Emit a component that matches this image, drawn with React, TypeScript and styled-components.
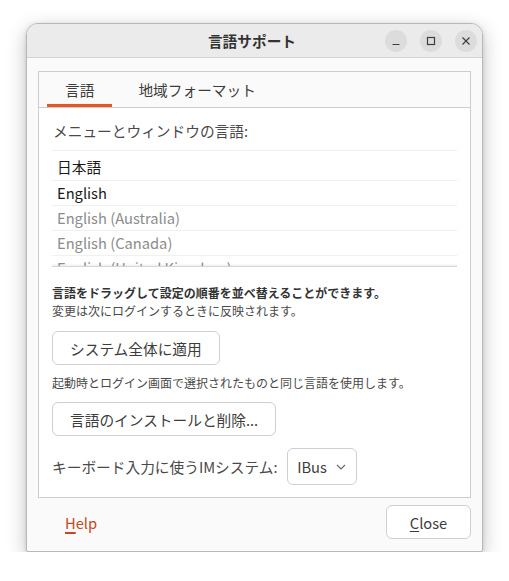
import styled, { createGlobalStyle } from 'styled-components';

const languages = [
  { name: '日本語', active: true },
  { name: 'English', active: true },
  { name: 'English (Australia)', active: false },
  { name: 'English (Canada)', active: false },
  { name: 'English (United Kingdom)', active: false },
];

const GlobalStyle = createGlobalStyle`
  body {
    margin: 0;
    background: #ffffff;
    font-family: "Noto Sans CJK JP", "Noto Sans", sans-serif;
    color: #3d3d3d;
  }
`;

function App() {
  return (
    <Page>
      <GlobalStyle />
      <Window>
        <TitleBar>
          <span />
          <Title>言語サポート</Title>
          <WinButtons>
            <WinButton aria-label='minimize'>
              <svg width='10' height='10' viewBox='0 0 10 10'>
                <path d='M1.5 8.5h7' stroke='#3d3d3d' strokeWidth='1.2' />
              </svg>
            </WinButton>
            <WinButton aria-label='maximize'>
              <svg width='10' height='10' viewBox='0 0 10 10'>
                <rect x='1.5' y='1.5' width='7' height='7' fill='none' stroke='#3d3d3d' strokeWidth='1.2' />
              </svg>
            </WinButton>
            <WinButton aria-label='close'>
              <svg width='10' height='10' viewBox='0 0 10 10'>
                <path d='M1.5 1.5l7 7M8.5 1.5l-7 7' stroke='#3d3d3d' strokeWidth='1.2' />
              </svg>
            </WinButton>
          </WinButtons>
        </TitleBar>

        <Body>
          <Frame>
            <TabBar>
              <Tab $selected>言語</Tab>
              <Tab>地域フォーマット</Tab>
            </TabBar>
            <TabPage>
              <SectionLabel>メニューとウィンドウの言語:</SectionLabel>
              <LangList>
                {languages.map((lang) => (
                  <LangRow key={lang.name} $active={lang.active}>
                    {lang.name}
                  </LangRow>
                ))}
              </LangList>
              <Hint $bold>言語をドラッグして設定の順番を並べ替えることができます。</Hint>
              <Hint>変更は次にログインするときに反映されます。</Hint>
              <Button $mt={11}>システム全体に適用</Button>
              <Hint $mt={9}>起動時とログイン画面で選択されたものと同じ言語を使用します。</Hint>
              <Button $mt={10}>言語のインストールと削除...</Button>
              <ImRow>
                <span>キーボード入力に使うIMシステム:</span>
                <Dropdown>
                  IBus
                  <svg width='10' height='6' viewBox='0 0 10 6'>
                    <path d='M1 1l4 4 4-4' fill='none' stroke='#6a6a6a' strokeWidth='1.2' />
                  </svg>
                </Dropdown>
              </ImRow>
            </TabPage>
          </Frame>

          <Footer>
            <HelpLink>
              <u>H</u>elp
            </HelpLink>
            <Button $width={85}>
              <u>C</u>lose
            </Button>
          </Footer>
        </Body>
      </Window>
    </Page>
  );
}

const Page = styled.div`
  padding: 23px 0 0 26px;
`;

const Window = styled.div`
  width: 457px;
  height: 529px;
  box-sizing: border-box;
  display: flex;
  flex-direction: column;
  background: #fafafa;
  border: 1px solid #b8b8b8;
  border-radius: 12px 12px 2px 2px;
  box-shadow: 0 6px 20px rgba(0, 0, 0, 0.24), 0 1px 4px rgba(0, 0, 0, 0.12);
  overflow: hidden;
`;

const TitleBar = styled.div`
  height: 36px;
  box-sizing: border-box;
  display: grid;
  grid-template-columns: 1fr auto 1fr;
  align-items: center;
  padding-right: 5px;
  background: #ebebeb;
  border-bottom: 1px solid #d2d2d2;
`;

const Title = styled.div`
  font-size: 14.7px;
  font-weight: 700;
  color: #333333;
`;

const WinButtons = styled.div`
  justify-self: end;
  display: flex;
  gap: 13px;
`;

const WinButton = styled.div`
  width: 22px;
  height: 22px;
  border-radius: 50%;
  background: #dcdcdc;
  display: flex;
  align-items: center;
  justify-content: center;
`;

const Body = styled.div`
  flex: 1;
  display: flex;
  flex-direction: column;
  padding: 13px 11px 12px;
`;

const Frame = styled.div`
  display: flex;
  flex-direction: column;
  height: 427px;
  box-sizing: border-box;
  border: 1px solid #cdcdcd;
  background: #ffffff;
`;

const TabBar = styled.div`
  height: 37px;
  box-sizing: border-box;
  display: flex;
  gap: 8px;
  padding-left: 8px;
  background: #fafafa;
  border-bottom: 1px solid #cdcdcd;
`;

const Tab = styled.div<{ $selected?: boolean }>`
  display: flex;
  align-items: center;
  padding: 3px 18px 0;
  font-size: 14.7px;
  color: #3d3d3d;
  box-sizing: border-box;
  border-bottom: 3px solid ${(p) => (p.$selected ? '#e95420' : 'transparent')};
`;

const TabPage = styled.div`
  display: flex;
  flex-direction: column;
  align-items: flex-start;
  padding: 13px 13px 12px;
`;

const SectionLabel = styled.div`
  font-size: 14.7px;
  line-height: 20px;
  color: #4a4a4a;
  padding-left: 1px;
`;

const LangList = styled.div`
  align-self: stretch;
  margin-top: 9px;
  height: 117px;
  box-sizing: border-box;
  overflow: hidden;
  padding-top: 4px;
  border-top: 1px solid #f0f0f0;
  border-bottom: 1px solid #d6d6d6;
  box-shadow: inset 0 -3px 3px -2px rgba(0, 0, 0, 0.08);
`;

const LangRow = styled.div<{ $active: boolean }>`
  height: 25px;
  box-sizing: border-box;
  display: flex;
  align-items: center;
  padding: 0 0 2px 5px;
  font-size: 14.7px;
  color: ${(p) => (p.$active ? '#1a1a1a' : '#8c8c8c')};
  & + & {
    border-top: 1px solid #f0f0f0;
  }
`;

const Hint = styled.div<{ $bold?: boolean; $mt?: number }>`
  font-size: 12px;
  line-height: 18px;
  font-weight: ${(p) => (p.$bold ? 700 : 400)};
  color: ${(p) => (p.$bold ? '#333333' : '#4a4a4a')};
  margin-top: ${(p) => (p.$bold ? 17 : p.$mt ?? 0)}px;
`;

const Button = styled.div<{ $mt?: number; $width?: number }>`
  height: 34px;
  box-sizing: border-box;
  ${(p) => (p.$width ? `width: ${p.$width}px;` : 'padding: 0 17px;')}
  display: flex;
  align-items: center;
  justify-content: center;
  margin-top: ${(p) => p.$mt ?? 0}px;
  border: 1px solid #cfcfcf;
  border-radius: 6px;
  background: #ffffff;
  font-size: 14.7px;
  color: #3d3d3d;

  u {
    text-decoration-thickness: 1px;
    text-underline-offset: 2px;
  }
`;

const ImRow = styled.div`
  display: flex;
  align-items: center;
  gap: 9px;
  margin-top: 12px;
  font-size: 14.7px;
  color: #4a4a4a;
`;

const Dropdown = styled.div`
  width: 70px;
  height: 37px;
  box-sizing: border-box;
  display: flex;
  align-items: center;
  justify-content: center;
  gap: 9px;
  border: 1px solid #cfcfcf;
  border-radius: 6px;
  background: #ffffff;
  font-size: 14.7px;
  color: #3d3d3d;
`;

const Footer = styled.div`
  display: flex;
  justify-content: space-between;
  align-items: center;
  margin-top: 7px;
`;

const HelpLink = styled.div`
  padding-left: 27px;
  font-size: 14.7px;
  color: #c24a1e;

  u {
    text-decoration-thickness: 2px;
    text-underline-offset: 3px;
  }
`;

export default App;
